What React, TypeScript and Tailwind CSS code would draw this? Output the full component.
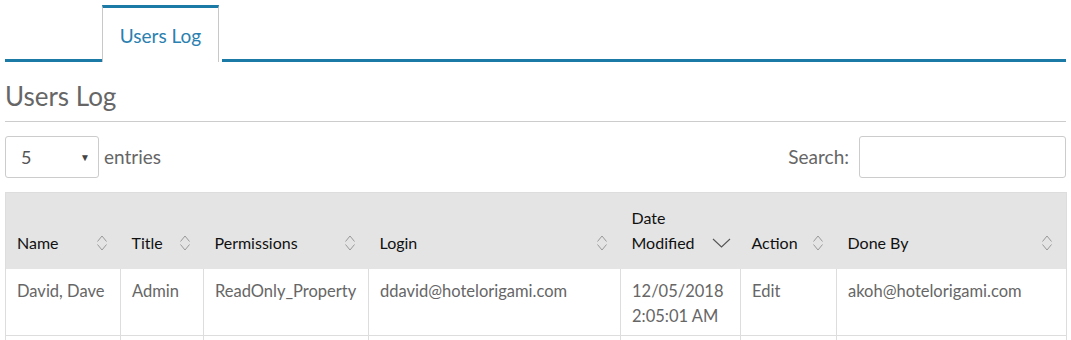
import React from "react";

function SortBoth() {
  return (
    <svg width="12" height="18" viewBox="0 0 12 18" className="absolute right-[13px] bottom-[17px]">
      <path d="M1.5 7.5 L6 2 L10.5 7.5" fill="none" stroke="#999" strokeWidth="1" />
      <path d="M1.5 10.5 L6 16 L10.5 10.5" fill="none" stroke="#999" strokeWidth="1" />
    </svg>
  );
}

function SortDesc() {
  return (
    <svg width="19" height="10" viewBox="0 0 19 10" className="absolute right-[10px] bottom-[21px]">
      <path d="M1 1 L9.5 9 L18 1" fill="none" stroke="#555" strokeWidth="1.1" />
    </svg>
  );
}

type Col = { label: React.ReactNode; w: number; desc?: boolean };

const cols: Col[] = [
  { label: "Name", w: 115 },
  { label: "Title", w: 83 },
  { label: "Permissions", w: 165 },
  { label: "Login", w: 252 },
  { label: "Date Modified", w: 120, desc: true },
  { label: "Action", w: 96 },
  { label: "Done By", w: 230 },
];

const rows: (string | string[])[][] = [
  ["David, Dave", "Admin", "ReadOnly_Property", "ddavid@hotelorigami.com", ["12/05/2018", "2:05:01 AM"], "Edit", "akoh@hotelorigami.com"],
  ["", "", "", "", "", "", ""],
];

export default function App() {
  return (
    <div
      className="w-[1071px] h-[340px] overflow-hidden bg-white px-[5px] pt-[5px] text-[16px] text-[#666]"
      style={{ fontFamily: "Lato, 'Open Sans', sans-serif" }}
    >
      {/* Tabs */}
      <div className="flex items-end h-[57px]">
        <div className="w-[97px] border-b-[3px] border-[#1b7aa6]" />
        <div className="w-[117px] h-[57px] border-t-[3px] border-t-[#1b7aa6] border-x border-x-[#c8c8c8] flex items-center justify-center pt-[2px] text-[19px] text-[#2a80b0]">
          Users Log
        </div>
        <div className="w-[3px]" />
        <div className="flex-1 border-b-[3px] border-[#1b7aa6]" />
      </div>

      {/* Heading */}
      <div className="mt-[21px] pb-[12px] border-b border-[#ccc] text-[26px] leading-[26px] text-[#666]">
        Users Log
      </div>

      {/* Controls */}
      <div className="mt-[14px] flex items-center justify-between h-[42px]">
        <div className="flex items-center">
          <div className="relative w-[94px] h-[42px] border border-[#ccc] rounded-[3px] flex items-center pl-[15px] text-[18px] text-[#555]">
            5
            <span className="absolute right-[8px] top-[13px] text-[10px] text-[#444]">▼</span>
          </div>
          <span className="ml-[5px] text-[19px] text-[#666]">entries</span>
        </div>
        <div className="flex items-center">
          <span className="text-[19px] text-[#666] mr-[10px]">Search:</span>
          <div className="w-[207px] h-[42px] border border-[#ccc] rounded-[3px]" />
        </div>
      </div>

      {/* Table */}
      <table className="mt-[14px] table-fixed border-collapse w-[1061px] border border-[#ddd]">
        <colgroup>
          {cols.map((c, i) => (
            <col key={i} style={{ width: c.w }} />
          ))}
        </colgroup>
        <thead>
          <tr className="bg-[#e4e4e4]">
            {cols.map((c, i) => (
              <th
                key={i}
                className="relative h-[76px] align-bottom text-left font-normal text-[#111] leading-[25.5px] pl-[11px] pr-[32px] pb-[13px]"
              >
                {c.label}
                {c.desc ? <SortDesc /> : <SortBoth />}
              </th>
            ))}
          </tr>
        </thead>
        <tbody>
          {rows.map((r, ri) => (
            <tr key={ri} className="border-b border-[#ddd]">
              {r.map((cell, ci) => (
                <td
                  key={ci}
                  className="align-top border-x border-[#ddd] pl-[11px] pr-[6px] pt-[10px] pb-[5px] h-[66px] leading-[25.5px] text-[16.5px] text-[#666]"
                >
                  {Array.isArray(cell) ? (
                    <>
                      <div>{cell[0]}</div>
                      <div>{cell[1]}</div>
                    </>
                  ) : (
                    cell
                  )}
                </td>
              ))}
            </tr>
          ))}
        </tbody>
      </table>
    </div>
  );
}
